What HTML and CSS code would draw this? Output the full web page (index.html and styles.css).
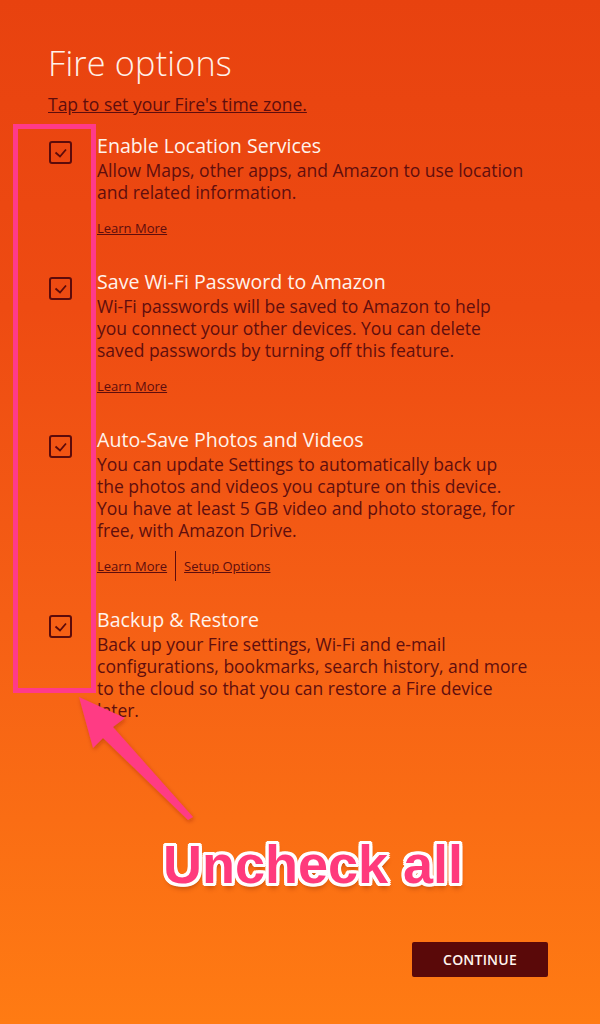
FILE: index.html
```html
<!DOCTYPE html>
<html>
<head>
<meta charset="utf-8">
<link rel="stylesheet" href="styles.css">
</head>
<body>
<div class="page">
  <h1 class="title">Fire options</h1>
  <a class="tz">Tap to set your Fire's time zone.</a>

  <div class="items">
    <div class="item">
      <div class="cb"><svg viewBox="0 0 23 23" width="23" height="23"><rect x="1" y="1" width="21" height="21" rx="2" fill="none" stroke="#5c0b0b" stroke-width="2"/><path d="M6.5 11.5 L11 15.5 L17 8.5" fill="none" stroke="#5c0b0b" stroke-width="1.8"/></svg></div>
      <div class="txt">
        <div class="head">Enable Location Services</div>
        <div class="body">Allow Maps, other apps, and Amazon to use location<br>and related information.</div>
        <div class="links"><a>Learn More</a></div>
      </div>
    </div>
    <div class="item">
      <div class="cb"><svg viewBox="0 0 23 23" width="23" height="23"><rect x="1" y="1" width="21" height="21" rx="2" fill="none" stroke="#5c0b0b" stroke-width="2"/><path d="M6.5 11.5 L11 15.5 L17 8.5" fill="none" stroke="#5c0b0b" stroke-width="1.8"/></svg></div>
      <div class="txt">
        <div class="head">Save Wi-Fi Password to Amazon</div>
        <div class="body">Wi-Fi passwords will be saved to Amazon to help<br>you connect your other devices. You can delete<br>saved passwords by turning off this feature.</div>
        <div class="links"><a>Learn More</a></div>
      </div>
    </div>
    <div class="item">
      <div class="cb"><svg viewBox="0 0 23 23" width="23" height="23"><rect x="1" y="1" width="21" height="21" rx="2" fill="none" stroke="#5c0b0b" stroke-width="2"/><path d="M6.5 11.5 L11 15.5 L17 8.5" fill="none" stroke="#5c0b0b" stroke-width="1.8"/></svg></div>
      <div class="txt">
        <div class="head">Auto-Save Photos and Videos</div>
        <div class="body">You can update Settings to automatically back up<br>the photos and videos you capture on this device.<br>You have at least 5 GB video and photo storage, for<br>free, with Amazon Drive.</div>
        <div class="links"><a>Learn More</a><span class="sep"></span><a>Setup Options</a></div>
      </div>
    </div>
    <div class="item">
      <div class="cb"><svg viewBox="0 0 23 23" width="23" height="23"><rect x="1" y="1" width="21" height="21" rx="2" fill="none" stroke="#5c0b0b" stroke-width="2"/><path d="M6.5 11.5 L11 15.5 L17 8.5" fill="none" stroke="#5c0b0b" stroke-width="1.8"/></svg></div>
      <div class="txt">
        <div class="head">Backup &amp; Restore</div>
        <div class="body">Back up your Fire settings, Wi-Fi and e-mail<br>configurations, bookmarks, search history, and more<br>to the cloud so that you can restore a Fire device<br>later.</div>
      </div>
    </div>
  </div>

  <div class="footer">
    <button class="continue">CONTINUE</button>
  </div>

  <div class="hl-box"></div>
  <svg class="arrow" width="600" height="1024" viewBox="0 0 600 1024">
    <defs>
      <filter id="sh" x="-20%" y="-20%" width="140%" height="140%">
        <feDropShadow dx="1" dy="2" stdDeviation="2" flood-color="#7a2000" flood-opacity="0.35"/>
      </filter>
    </defs>
    <path d="M79 697 L125 718 L113 727 L193 817 L188 820 L103 738 L93 748 Z" fill="#ff3a84" filter="url(#sh)"/>
  </svg>
  <div class="callout">Uncheck all</div>
</div>
</body>
</html>
```

FILE: styles.css
```css
* { box-sizing: border-box; }
html, body { margin: 0; padding: 0; }
body {
  width: 600px;
  height: 1024px;
  overflow: hidden;
  font-family: "Open Sans", "Noto Sans", sans-serif;
}
.page {
  position: relative;
  width: 600px;
  height: 1024px;
  background: linear-gradient(180deg, #e8420f 0%, #ee4b12 30%, #f55f15 60%, #ff7b13 100%);
  padding: 40px 0 0 48px;
  display: flex;
  flex-direction: column;
}
.title {
  margin: 0;
  font-weight: 300;
  font-size: 34.2px;
  line-height: 46px;
  color: #fff1ea;
  letter-spacing: 0.2px;
}
.tz {
  margin-top: 7px;
  font-size: 17.5px;
  line-height: 22px;
  color: #5e0d0d;
  text-decoration: underline;
  align-self: flex-start;
}
.items {
  margin-top: 18px;
  display: flex;
  flex-direction: column;
  gap: 32px;
}
.item {
  display: flex;
}
.cb {
  width: 49px;
  flex: none;
  padding: 8px 0 0 1px;
}
.cb svg { display: block; }
.head {
  font-size: 19.6px;
  line-height: 26px;
  color: #fff3ec;
}
.body {
  font-size: 17.5px;
  line-height: 22px;
  color: #600e0e;
}
.links {
  margin-top: 16px;
  display: flex;
  align-items: center;
  height: 18px;
}
.links a {
  font-size: 13px;
  line-height: 20px;
  color: #5e0d0d;
  text-decoration: underline;
}
.sep {
  width: 1px;
  height: 30px;
  background: #5e0d0d;
  margin: 0 8px;
}
.footer {
  margin-top: auto;
  padding: 0 52px 47px 0;
  display: flex;
  justify-content: flex-end;
}
.continue {
  width: 136px;
  height: 35px;
  border: none;
  border-radius: 2px;
  background: #5a0909;
  color: #fff4ee;
  font-family: "Open Sans", "Noto Sans", sans-serif;
  font-size: 14px;
  font-weight: 600;
  letter-spacing: 0.2px;
}
.hl-box {
  position: absolute;
  left: 13px;
  top: 124px;
  width: 83px;
  height: 569px;
  border: 5px solid #ff3a8a;
}
.arrow {
  position: absolute;
  left: 0;
  top: 0;
}
.callout {
  position: absolute;
  left: 0;
  right: 0;
  top: 834px;
  text-align: center;
  padding-left: 26px;
  font-family: "Liberation Sans", Arial, sans-serif;
  font-weight: 700;
  font-size: 54px;
  line-height: 60px;
  color: #ff3a7c;
  text-shadow:
    3px 0 0 #fff, -3px 0 0 #fff, 0 3px 0 #fff, 0 -3px 0 #fff,
    2px 2px 0 #fff, -2px 2px 0 #fff, 2px -2px 0 #fff, -2px -2px 0 #fff,
    3px 2px 0 #fff, -3px 2px 0 #fff, 3px -2px 0 #fff, -3px -2px 0 #fff,
    2px 3px 0 #fff, -2px 3px 0 #fff, 2px -3px 0 #fff, -2px -3px 0 #fff,
    1px 5px 5px rgba(120, 30, 0, 0.45);
}
```
